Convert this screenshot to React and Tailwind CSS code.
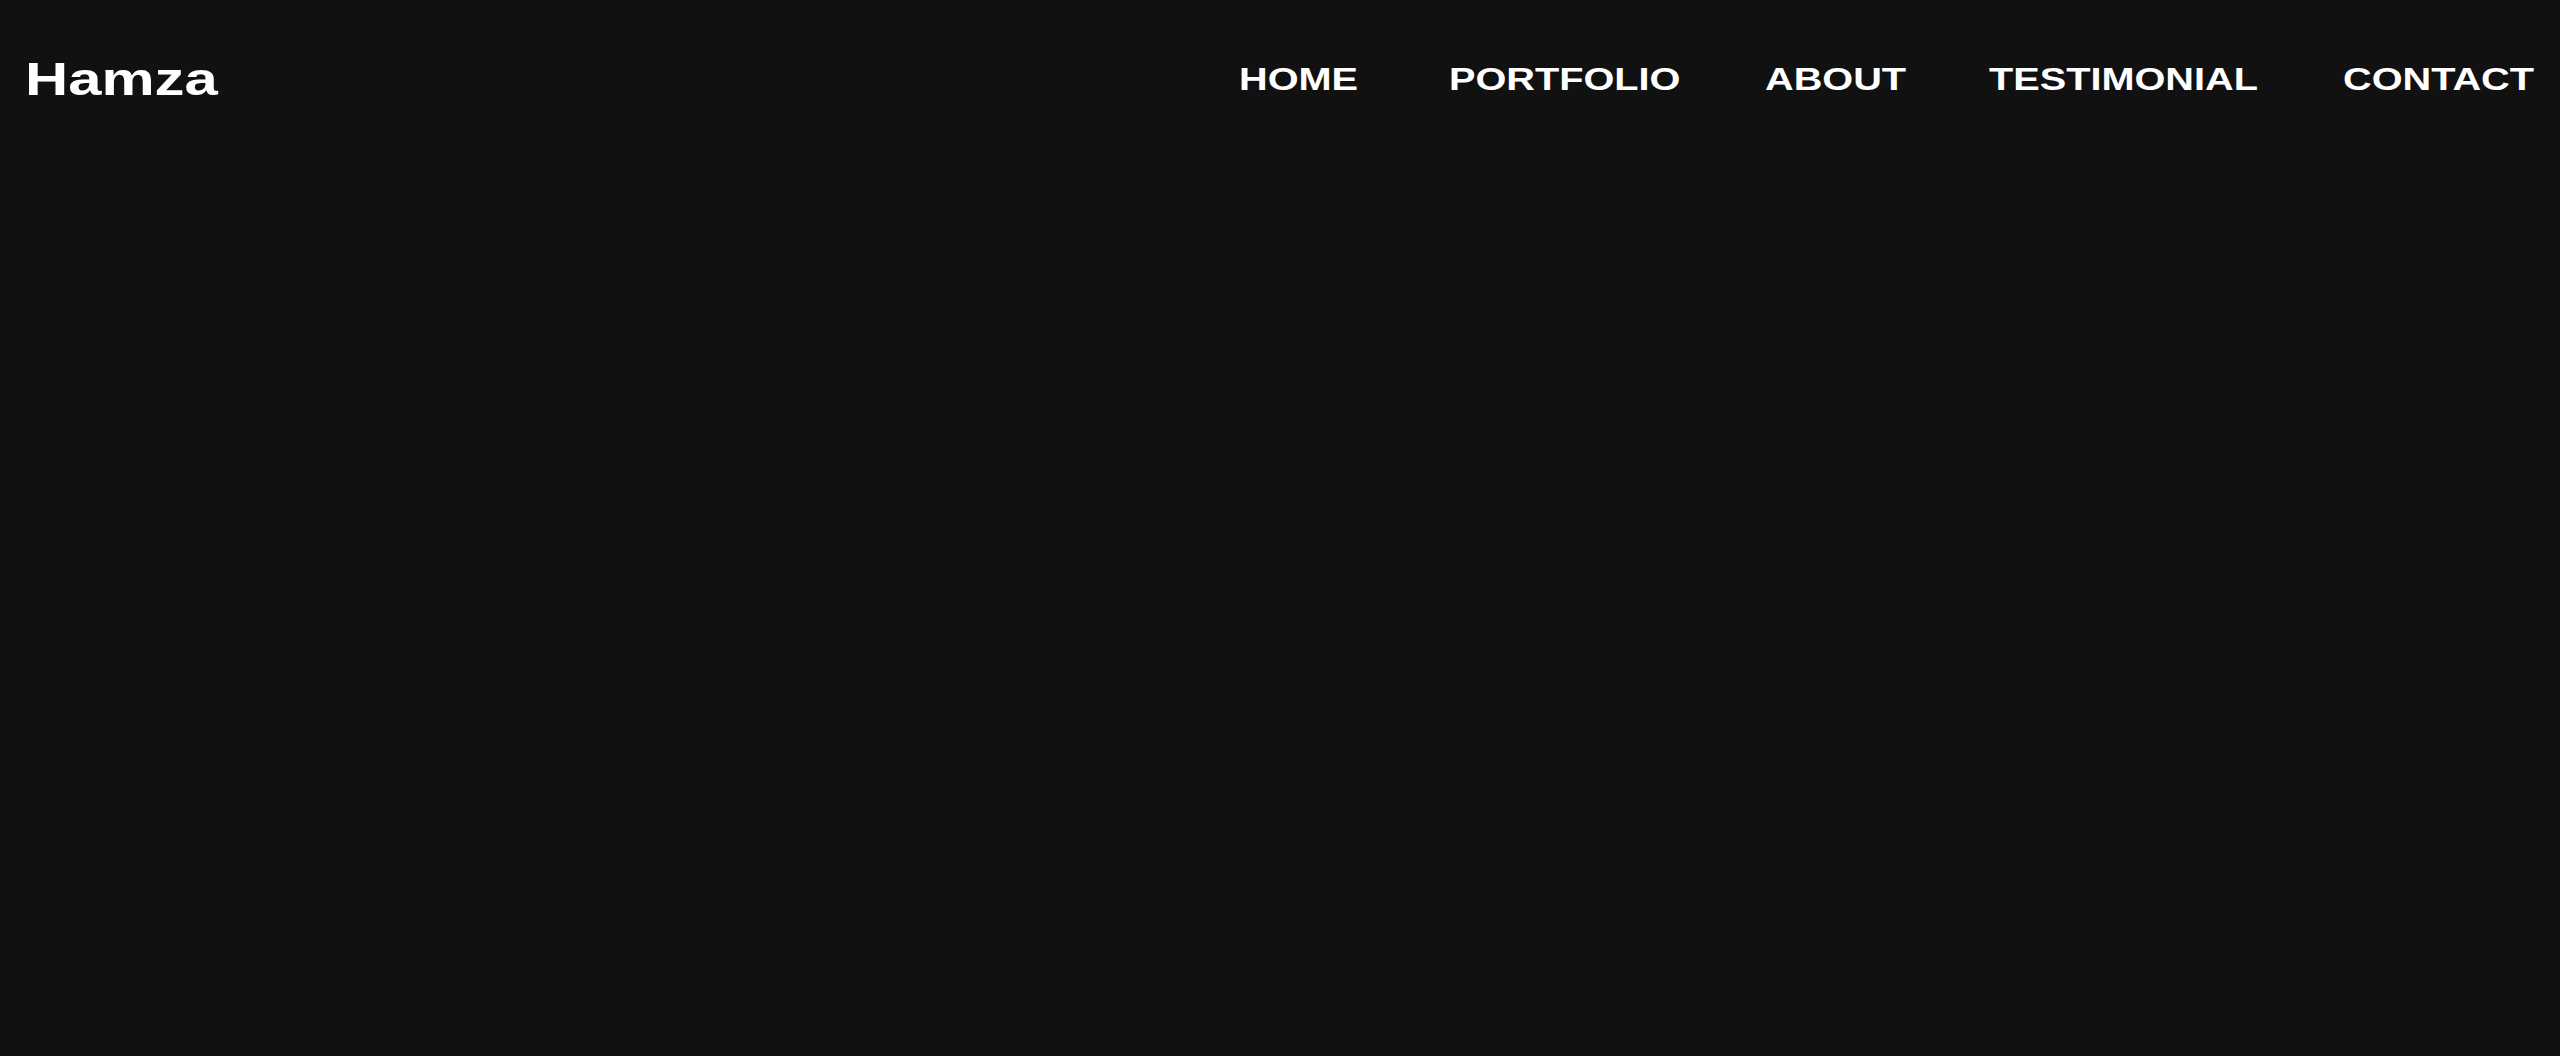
export default function App() {
  const items = [
    { label: "HOME", w: "w-[121px]" },
    { label: "PORTFOLIO", w: "w-[227px]" },
    { label: "ABOUT", w: "w-[135px]" },
    { label: "TESTIMONIAL", w: "w-[265px]" },
    { label: "CONTACT", w: "w-[193px]" },
  ];
  return (
    <div className="min-h-[1056px] w-full bg-[#111111] text-white" style={{ fontFamily: '"Liberation Sans", Arial, sans-serif' }}>
      <header className="flex h-[157px] items-center justify-between pl-[25px] pr-[24px]">
        <div className="w-[193px] whitespace-nowrap">
          <span className="inline-block origin-left scale-x-[1.3] text-[46px] font-bold leading-none">Hamza</span>
        </div>
        <nav className="flex items-center gap-[89px] pt-[2px]">
          {items.map((it) => (
            <a key={it.label} href="#" className={`${it.w} block whitespace-nowrap`}>
              <span className="inline-block origin-left scale-x-[1.24] text-[32px] font-bold leading-none">{it.label}</span>
            </a>
          ))}
        </nav>
      </header>
    </div>
  );
}
